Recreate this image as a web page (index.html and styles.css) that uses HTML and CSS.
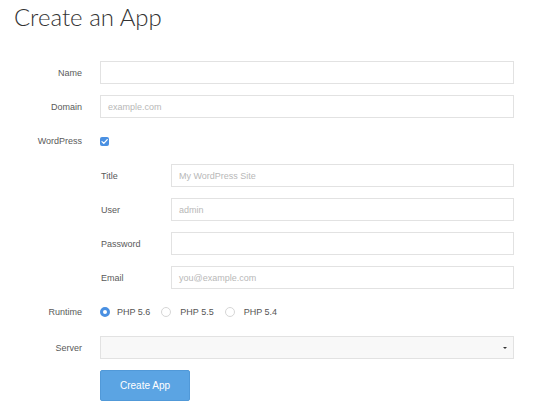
FILE: index.html
```html
<!DOCTYPE html>
<html>
<head>
<meta charset="utf-8">
<link rel="stylesheet" href="styles.css">
</head>
<body>
<h1 class="title">Create an App</h1>
<form class="form">
  <div class="row">
    <label class="label">Name</label>
    <div class="input"></div>
  </div>
  <div class="row">
    <label class="label">Domain</label>
    <div class="input"><span class="ph">example.com</span></div>
  </div>
  <div class="row row-wp">
    <label class="label">WordPress</label>
    <div class="control">
      <span class="checkbox">
        <svg width="9" height="9" viewBox="0 0 9 9"><path d="M2 4.6 L3.8 6.4 L7.2 2.6" fill="none" stroke="#fff" stroke-width="1.3" stroke-linecap="round" stroke-linejoin="round"/></svg>
      </span>
    </div>
  </div>
  <div class="sub">
    <div class="subrow">
      <label class="sublabel">Title</label>
      <div class="input"><span class="ph">My WordPress Site</span></div>
    </div>
    <div class="subrow">
      <label class="sublabel">User</label>
      <div class="input"><span class="ph">admin</span></div>
    </div>
    <div class="subrow">
      <label class="sublabel">Password</label>
      <div class="input"></div>
    </div>
    <div class="subrow">
      <label class="sublabel">Email</label>
      <div class="input"><span class="ph">you@example.com</span></div>
    </div>
  </div>
  <div class="row row-runtime">
    <label class="label">Runtime</label>
    <div class="radios">
      <span class="radio radio-on"></span><span class="rtext">PHP 5.6</span>
      <span class="radio"></span><span class="rtext">PHP 5.5</span>
      <span class="radio"></span><span class="rtext">PHP 5.4</span>
    </div>
  </div>
  <div class="row">
    <label class="label">Server</label>
    <div class="select"><span class="caret"></span></div>
  </div>
  <div class="row row-btn">
    <span></span>
    <div class="control"><button type="button" class="btn">Create App</button></div>
  </div>
</form>
</body>
</html>
```
FILE: styles.css
```css
html, body {
  margin: 0;
  padding: 0;
  background: #fff;
}
body {
  font-family: "Liberation Sans", Arial, sans-serif;
  color: #555;
  width: 533px;
}
.title {
  font-family: Lato, "Open Sans", sans-serif;
  font-weight: 300;
  font-size: 24px;
  line-height: 30px;
  color: #333;
  margin: 2px 0 0 14px;
  letter-spacing: 0;
}
.form {
  margin-top: 29px;
  padding-right: 19px;
}
.row {
  display: grid;
  grid-template-columns: 82px 1fr;
  column-gap: 18px;
  align-items: center;
  height: 23px;
  margin-bottom: 11px;
}
.row-wp {
  height: 24px;
}
.row-runtime {
  height: 24px;
  margin-bottom: 12px;
}
.row-btn {
  height: 31px;
}
.label {
  text-align: right;
  font-size: 9px;
  color: #5a5a5a;
}
.input, .select {
  box-sizing: border-box;
  height: 23px;
  border: 1px solid #e2e2e2;
  background: #fff;
  display: flex;
  align-items: center;
  padding-left: 7px;
}
.ph {
  font-size: 9px;
  color: #b8b8b8;
}
.select {
  background: #f8f8f8;
  justify-content: flex-end;
  padding-right: 6px;
}
.caret {
  width: 0;
  height: 0;
  border-left: 2px solid transparent;
  border-right: 2px solid transparent;
  border-top: 2px solid #333;
}
.control {
  display: flex;
  align-items: center;
}
.checkbox {
  width: 9px;
  height: 9px;
  border-radius: 2px;
  background: #4a90e2;
  display: flex;
  align-items: center;
  justify-content: center;
}
.checkbox svg {
  display: block;
}
.sub {
  padding-left: 100px;
}
.subrow {
  display: grid;
  grid-template-columns: 71px 1fr;
  align-items: center;
  height: 23px;
  margin-bottom: 11px;
}
.sublabel {
  font-size: 9px;
  color: #5a5a5a;
  padding-left: 1px;
}
.radios {
  display: flex;
  align-items: center;
  font-size: 9px;
  color: #555;
}
.radio {
  box-sizing: border-box;
  width: 10px;
  height: 10px;
  border-radius: 50%;
  border: 1px solid #d6d6d6;
  background: #fff;
  margin-right: 9px;
}
.radio-on {
  border: 3px solid #4a90e2;
  margin-right: 7px;
}
.rtext {
  margin-right: 11px;
}
.btn {
  width: 90px;
  height: 31px;
  background: #5ba4e3;
  border: 1px solid #5199d8;
  border-radius: 2px;
  color: #fff;
  font-family: "Liberation Sans", Arial, sans-serif;
  font-size: 10px;
  padding: 0;
}
```
